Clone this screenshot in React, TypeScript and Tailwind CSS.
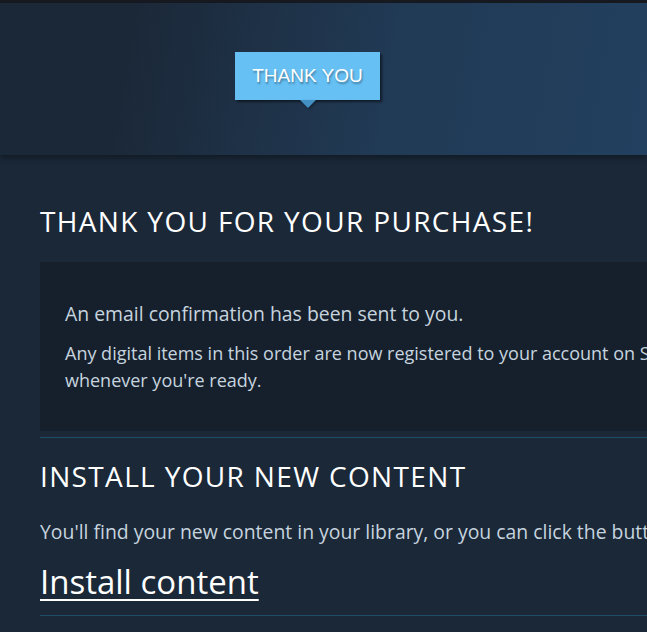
export default function App() {
  return (
    <div className="min-h-[632px] w-[647px] overflow-hidden bg-[#1b2838] font-['Open_Sans',sans-serif]">
      <div className="h-[3px] bg-[#171a21]" />
      {/* header band */}
      <div className="relative h-[152px] bg-[linear-gradient(100deg,#1b2838_20%,#213a55_60%,#22405f_100%)] shadow-[0_3px_6px_rgba(0,0,0,0.35)]">
        <div className="absolute left-[235px] top-[49px]">
          <div className="relative flex h-[48px] w-[145px] items-center justify-center bg-[#66c0f4] shadow-[2px_2px_2px_rgba(0,0,0,0.5)]">
            <span className="font-['Liberation_Sans',sans-serif] text-[19px] text-white [text-shadow:1px_2px_2px_rgba(0,0,0,0.35)]">
              THANK YOU
            </span>
          </div>
          <div className="mx-auto h-0 w-0 border-x-[8px] border-t-[8px] border-x-transparent border-t-[#4290c4] drop-shadow-[1px_1px_1px_rgba(0,0,0,0.4)]" />
        </div>
      </div>

      <div className="w-[940px] pl-[40px]">
        <h1 className="mt-[48px] text-[28px] leading-[36px] tracking-[1.35px] text-white">
          THANK YOU FOR YOUR PURCHASE!
        </h1>
        <div className="mt-[23px] h-[169px] bg-[#16202d] px-[25px] pt-[39px] text-[#c6d4df]">
          <p className="text-[19.4px] leading-[26px]">An email confirmation has been sent to you.</p>
          <p className="mt-[13px] whitespace-nowrap text-[18px] leading-[27px]">
            Any digital items in this order are now registered to your account on Steam. You can install and play them from your Steam library
            <br />
            whenever you're ready.
          </p>
        </div>
        <div className="mt-[6px] h-px bg-[#1d4d69]" />
        <h2 className="mt-[20px] text-[28px] leading-[36px] tracking-[1.35px] text-white">
          INSTALL YOUR NEW CONTENT
        </h2>
        <p className="mt-[25px] whitespace-nowrap text-[19.4px] leading-[26px] text-[#c6d4df]">
          You'll find your new content in your library, or you can click the button below to start installing now.
        </p>
        <a
          href="#"
          className="mt-[17px] block w-fit text-[33px] leading-[40px] text-white underline decoration-[2px] underline-offset-[5px]"
        >
          Install content
        </a>
        <div className="mt-[13px] h-px bg-[#1d4d69]" />
      </div>
    </div>
  );
}
